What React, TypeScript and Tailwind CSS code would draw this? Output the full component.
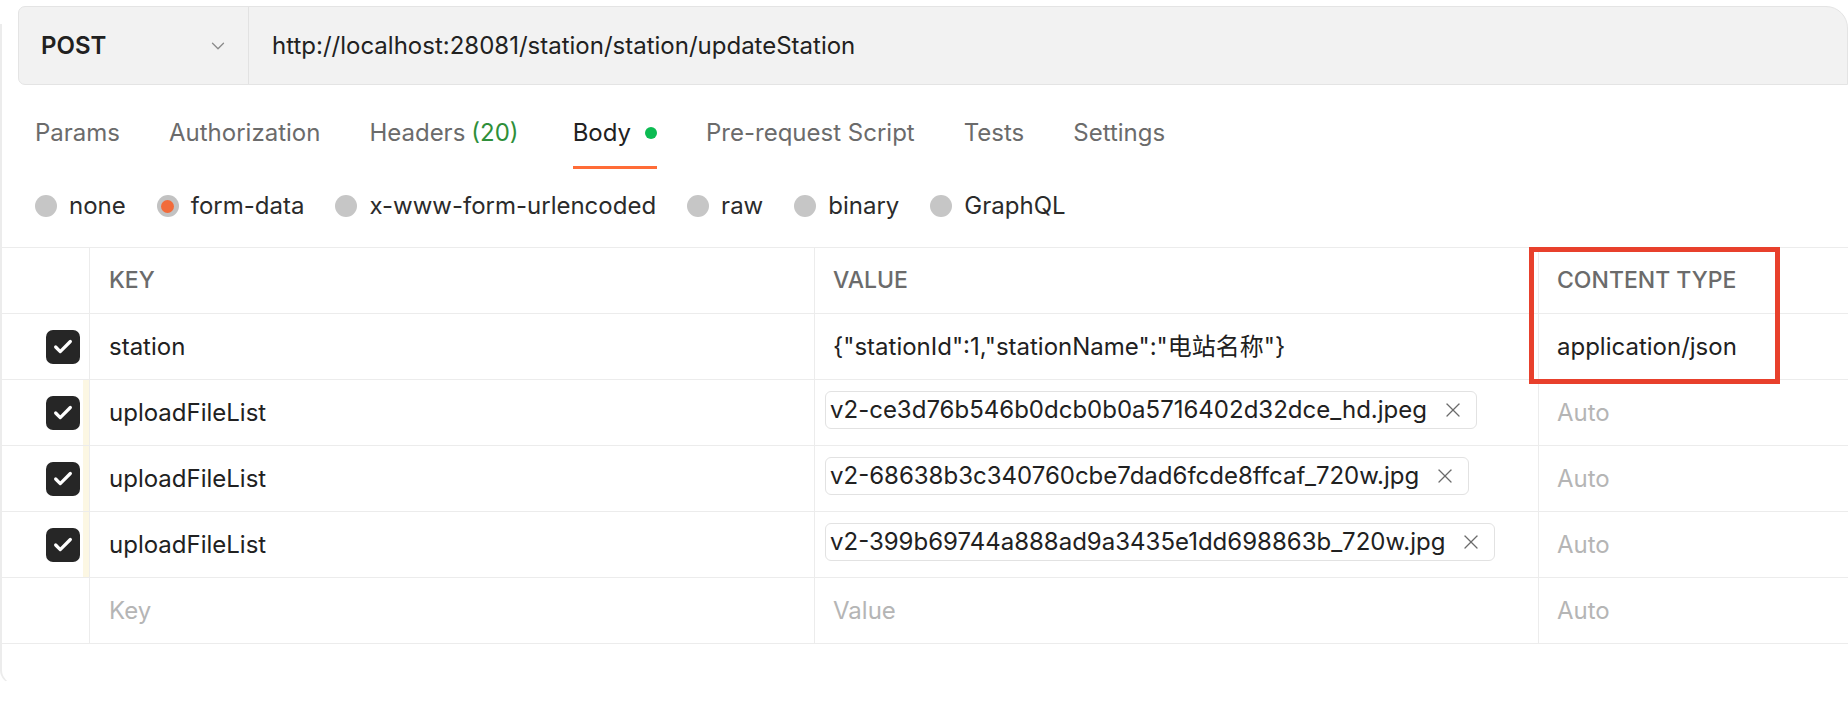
import { ChevronDown, X, Check } from "lucide-react";

const tabs = [
  { label: "Params" },
  { label: "Authorization" },
  { label: "Headers", count: "(20)" },
  { label: "Body", active: true },
  { label: "Pre-request Script" },
  { label: "Tests" },
  { label: "Settings" },
];

const bodyTypes = ["none", "form-data", "x-www-form-urlencoded", "raw", "binary", "GraphQL"];

type Row = {
  key: string;
  value: string;
  file?: boolean;
  contentType?: string;
};

const rows: Row[] = [
  { key: "station", value: '{"stationId":1,"stationName":"电站名称"}', contentType: "application/json" },
  { key: "uploadFileList", value: "v2-ce3d76b546b0dcb0b0a5716402d32dce_hd.jpeg", file: true },
  { key: "uploadFileList", value: "v2-68638b3c340760cbe7dad6fcde8ffcaf_720w.jpg", file: true },
  { key: "uploadFileList", value: "v2-399b69744a888ad9a3435e1dd698863b_720w.jpg", file: true },
];

function Checkbox() {
  return (
    <div className="w-[34px] h-[34px] rounded-[7px] bg-[#262626] flex items-center justify-center">
      <Check size={22} strokeWidth={3.5} className="text-white" />
    </div>
  );
}

function Radio({ selected }: { selected?: boolean }) {
  if (selected) {
    return (
      <div className="w-[22px] h-[22px] rounded-full bg-[#c2c2c2] flex items-center justify-center">
        <div className="w-[13px] h-[13px] rounded-full bg-[#f26b3a]" />
      </div>
    );
  }
  return <div className="w-[22px] h-[22px] rounded-full bg-[#c6c6c6]" />;
}

export default function App() {
  return (
    <div
      className="relative w-[1848px] h-[712px] bg-white overflow-hidden text-[#212121]"
      style={{ fontFamily: "Inter, 'Noto Sans', 'Noto Sans CJK SC', sans-serif" }}
    >
      {/* window frame edge */}
      <div className="absolute left-0 top-[24px] w-[30px] h-[660px] border-l-2 border-b border-[#ececec] border-b-transparent rounded-bl-[14px] pointer-events-none" />

      {/* request bar */}
      <div className="ml-[18px] mt-[6px] h-[79px] flex bg-[#f2f2f2] border border-[#e4e4e4] rounded-l-[7px] rounded-tr-[22px]">
        <div className="w-[230px] flex items-center justify-between pl-[22px] pr-[19px] border-r border-[#e2e2e2]">
          <span className="text-[24px] font-semibold">POST</span>
          <ChevronDown size={22} strokeWidth={1.4} className="text-[#8a8a8a]" />
        </div>
        <div className="flex items-center pl-[23px] text-[24px]">
          http://localhost:28081/station/station/updateStation
        </div>
      </div>

      {/* tabs */}
      <div className="flex items-center gap-[49px] pl-[35px] mt-[29px] h-[38px]">
        {tabs.map((t) => (
          <div key={t.label} className={`relative flex items-center ${t.active ? "ml-[5px]" : ""}`}>
            <span className={`text-[24px] ${t.active ? "text-[#212121]" : "text-[#6b6b6b]"}`}>{t.label}</span>
            {t.count && <span className="text-[24px] text-[#2f8f3a] ml-[6px]">{t.count}</span>}
            {t.active && <span className="ml-[14px] w-[12px] h-[12px] rounded-full bg-[#0cbb52]" />}
            {t.active && <div className="absolute left-0 right-0 -bottom-[18px] h-[3px] bg-[#ff6c37]" />}
          </div>
        ))}
      </div>

      {/* body types */}
      <div className="flex items-center pl-[35px] mt-[39px] h-[30px] gap-[31px]">
        {bodyTypes.map((b) => (
          <div key={b} className="flex items-center gap-[12px]">
            <Radio selected={b === "form-data"} />
            <span className="text-[24px] text-[#2b2b2b]">{b}</span>
          </div>
        ))}
      </div>

      {/* table */}
      <div className="relative mt-[26px] border-t border-[#ececec]">
        <div className="flex h-[66px] border-b border-[#ececec] text-[23px] font-medium text-[#6b6b6b]">
          <div className="w-[90px] border-r border-[#ececec]" />
          <div className="w-[725px] border-r border-[#ececec] flex items-center pl-[19px]">KEY</div>
          <div className="w-[724px] border-r border-[#ececec] flex items-center pl-[18px]">VALUE</div>
          <div className="flex-1 flex items-center pl-[18px]">CONTENT TYPE</div>
        </div>

        {rows.map((r, i) => (
          <div key={i} className="flex h-[66px] border-b border-[#ececec] text-[24px]">
            <div className="w-[90px] border-r border-[#ececec] flex items-center justify-end">
              <div className="mr-[3px]">
                <Checkbox />
              </div>
              <div className={`self-stretch w-[6px] ${r.file ? "bg-[#fcf7e3]" : ""}`} />
            </div>
            <div className="w-[725px] border-r border-[#ececec] flex items-center pl-[19px]">{r.key}</div>
            <div className="w-[724px] border-r border-[#ececec] flex items-center">
              {r.file ? (
                <div className="ml-[10px] mb-[6px] h-[38px] flex items-center border border-[#e2e2e2] rounded-[6px] pl-[4px] pr-[11px] gap-[14px]">
                  <span>{r.value}</span>
                  <X size={24} strokeWidth={1.3} className="text-[#6b6b6b]" />
                </div>
              ) : (
                <span className="pl-[18px]">{r.value}</span>
              )}
            </div>
            <div className={`flex-1 flex items-center pl-[18px] ${r.contentType ? "" : "text-[#b5b5b5]"}`}>
              {r.contentType ?? "Auto"}
            </div>
          </div>
        ))}

        <div className="flex h-[66px] border-b border-[#ececec] text-[24px] text-[#b5b5b5]">
          <div className="w-[90px] border-r border-[#ececec]" />
          <div className="w-[725px] border-r border-[#ececec] flex items-center pl-[19px]">Key</div>
          <div className="w-[724px] border-r border-[#ececec] flex items-center pl-[18px]">Value</div>
          <div className="flex-1 flex items-center pl-[18px]">Auto</div>
        </div>

        {/* highlight box */}
        <div className="absolute left-[1529px] -top-[1px] w-[251px] h-[137px] border-[5px] border-[#e8402c] pointer-events-none" />
      </div>
    </div>
  );
}
